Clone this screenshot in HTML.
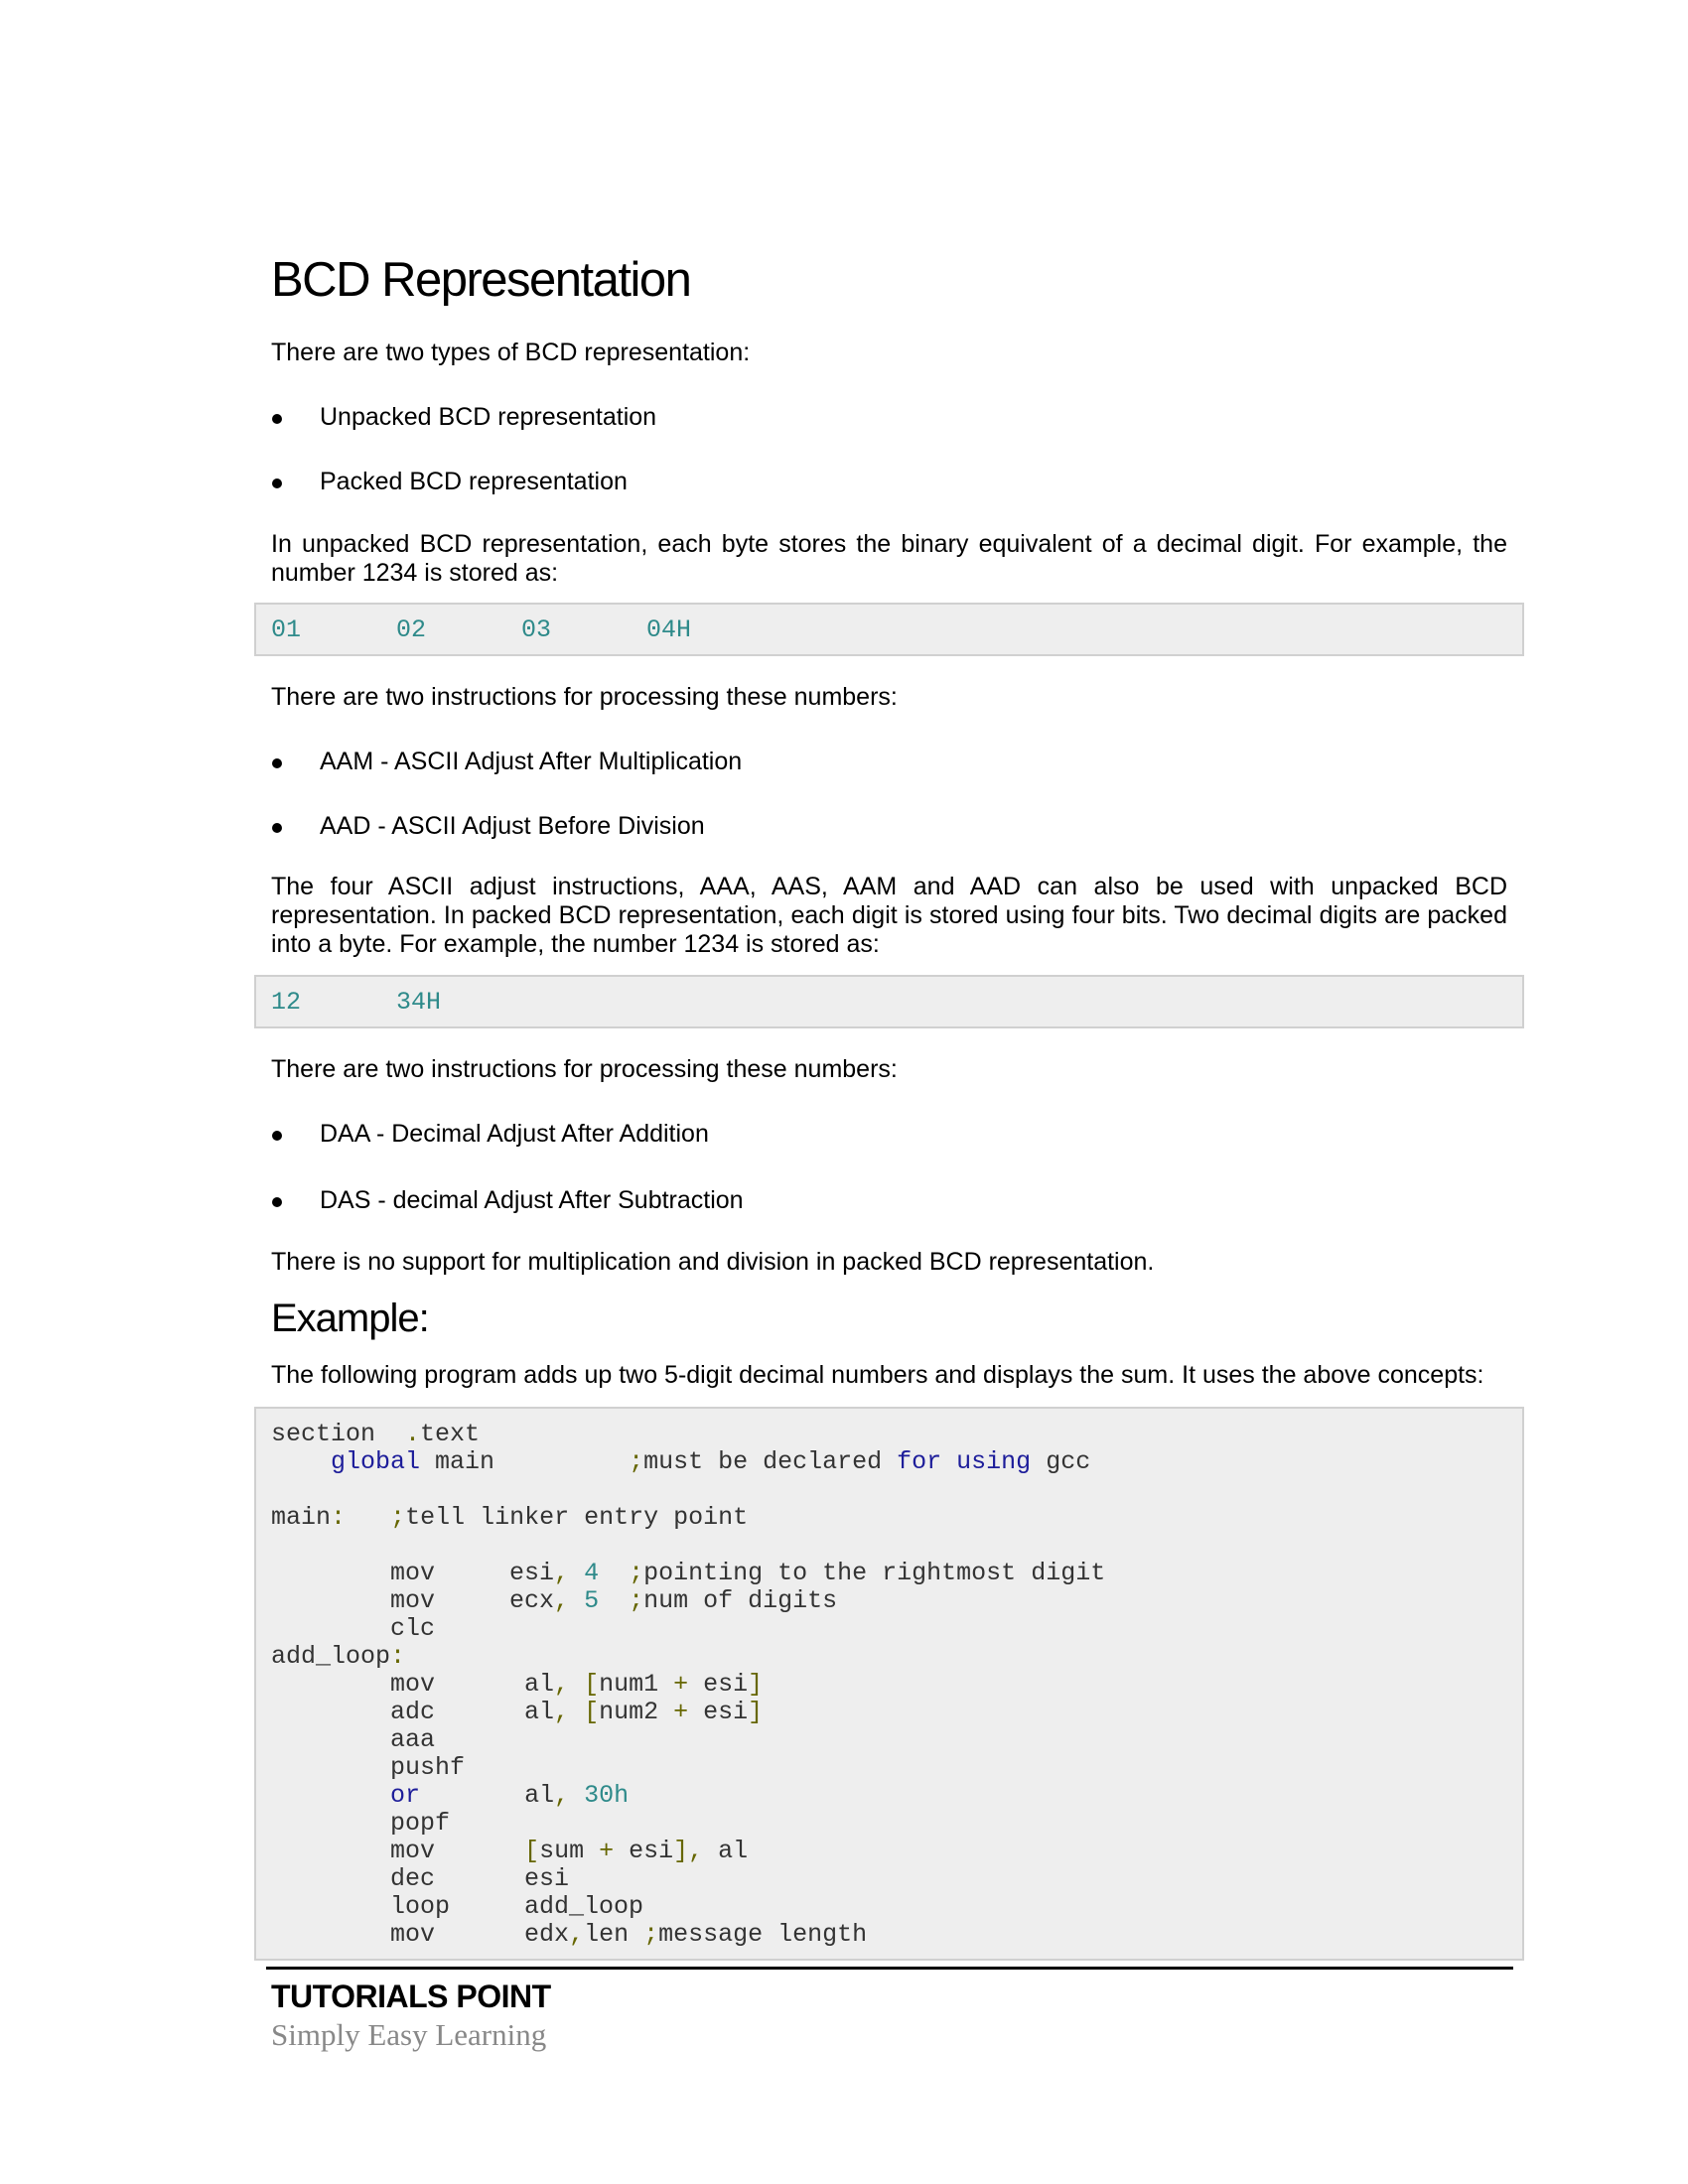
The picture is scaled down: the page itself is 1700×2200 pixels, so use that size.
<!DOCTYPE html>
<html><head><meta charset="utf-8"><style>
body{margin:0;width:1700px;height:2200px;background:#fff;position:relative;font-family:"Liberation Sans",sans-serif;color:#000;}
.a{position:absolute;left:273px;white-space:nowrap;font-size:25px;line-height:29px;}
.p{position:absolute;left:273px;width:1245px;font-size:25px;line-height:29px;text-align:justify;text-align-last:left;}
.b{position:absolute;left:273px;font-size:25px;line-height:29px;white-space:nowrap;}
.b:before{content:"";position:absolute;left:1px;top:11px;width:10px;height:10px;border-radius:50%;background:#000;}
.b span{margin-left:49px;}
.box{position:absolute;left:256px;width:1279px;background:#eeeeee;border:2px solid #d0d0d0;box-sizing:border-box;}
pre{margin:0;font-family:"Liberation Mono",monospace;font-size:25px;line-height:28px;color:#333;}
.k{color:#1d1d9a}.n{color:#2e8a8a}.o{color:#666600}
</style></head><body>
<div class="a" style="top:252px;font-size:49px;line-height:60px;letter-spacing:-1.5px;">BCD Representation</div>
<div class="a" style="top:341px;">There are two types of BCD representation:</div>
<div class="b" style="top:406px;"><span>Unpacked BCD representation</span></div>
<div class="b" style="top:471px;"><span>Packed BCD representation</span></div>
<div class="p" style="top:534px;">In unpacked BCD representation, each byte stores the binary equivalent of a decimal digit. For example, the number 1234 is stored as:</div>
<div class="box" style="top:607px;height:54px;"></div>
<pre style="position:absolute;top:621px;left:273px;" class="n">01</pre>
<pre style="position:absolute;top:621px;left:399px;" class="n">02</pre>
<pre style="position:absolute;top:621px;left:525px;" class="n">03</pre>
<pre style="position:absolute;top:621px;left:651px;" class="n">04H</pre>
<div class="a" style="top:688px;">There are two instructions for processing these numbers:</div>
<div class="b" style="top:753px;"><span>AAM - ASCII Adjust After Multiplication</span></div>
<div class="b" style="top:818px;"><span>AAD - ASCII Adjust Before Division</span></div>
<div class="p" style="top:879px;">The four ASCII adjust instructions, AAA, AAS, AAM and AAD can also be used with unpacked BCD representation. In packed BCD representation, each digit is stored using four bits. Two decimal digits are packed into a byte. For example, the number 1234 is stored as:</div>
<div class="box" style="top:982px;height:54px;"></div>
<pre style="position:absolute;top:996px;left:273px;" class="n">12</pre>
<pre style="position:absolute;top:996px;left:399px;" class="n">34H</pre>
<div class="a" style="top:1063px;">There are two instructions for processing these numbers:</div>
<div class="b" style="top:1128px;"><span>DAA - Decimal Adjust After Addition</span></div>
<div class="b" style="top:1195px;"><span>DAS - decimal Adjust After Subtraction</span></div>
<div class="a" style="top:1257px;">There is no support for multiplication and division in packed BCD representation.</div>
<div class="a" style="top:1306px;font-size:40px;line-height:44px;letter-spacing:-1px;">Example:</div>
<div class="a" style="top:1371px;">The following program adds up two 5-digit decimal numbers and displays the sum. It uses the above concepts:</div>
<div class="box" style="top:1417px;height:558px;"></div>
<pre style="position:absolute;top:1431px;left:273px;">section  <span class="o">.</span>text
    <span class="k">global</span> main         <span class="o">;</span>must be declared <span class="k">for</span> <span class="k">using</span> gcc

main<span class="o">:</span>   <span class="o">;</span>tell linker entry point

        mov     esi<span class="o">,</span> <span class="n">4</span>  <span class="o">;</span>pointing to the rightmost digit
        mov     ecx<span class="o">,</span> <span class="n">5</span>  <span class="o">;</span>num of digits
        clc
add_loop<span class="o">:</span>
        mov      al<span class="o">,</span> <span class="o">[</span>num1 <span class="o">+</span> esi<span class="o">]</span>
        adc      al<span class="o">,</span> <span class="o">[</span>num2 <span class="o">+</span> esi<span class="o">]</span>
        aaa
        pushf
        <span class="k">or</span>       al<span class="o">,</span> <span class="n">30h</span>
        popf
        mov      <span class="o">[</span>sum <span class="o">+</span> esi<span class="o">],</span> al
        dec      esi
        loop     add_loop
        mov      edx<span class="o">,</span>len <span class="o">;</span>message length</pre>
<div style="position:absolute;left:268px;top:1981px;width:1256px;height:3px;background:#000;"></div>
<div class="a" style="top:1993px;font-size:32px;line-height:36px;font-weight:bold;letter-spacing:-0.5px;">TUTORIALS POINT</div>
<div class="a" style="top:2032px;font-family:'Liberation Serif',serif;font-size:31px;line-height:36px;color:#888;">Simply Easy Learning</div>
</body></html>
